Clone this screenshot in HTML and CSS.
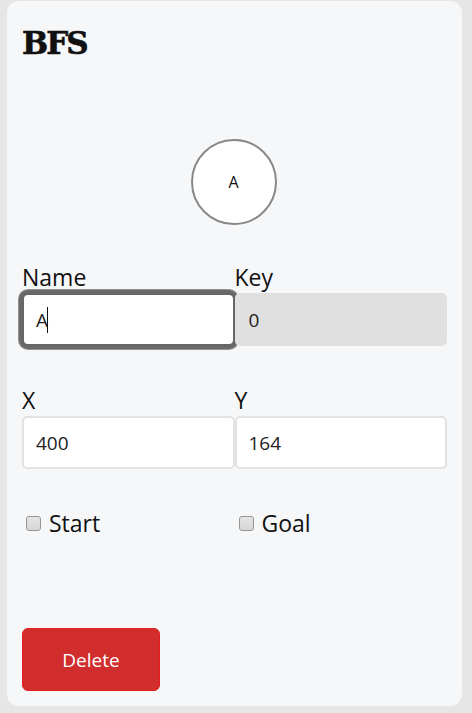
FILE: index.html
```html
<!DOCTYPE html>
<html lang="en">
<head>
<meta charset="utf-8">
<title>BFS</title>
<link rel="stylesheet" href="styles.css">
</head>
<body>
<div class="card">
  <h1 class="title">BFS</h1>
  <div class="preview"><div class="node">A</div></div>
  <div class="fields">
    <label class="field">
      <span class="label">Name</span>
      <span class="input-wrap">
        <input class="input is-focused" type="text" value="A">
        <span class="caret"></span>
      </span>
    </label>
    <label class="field">
      <span class="label">Key</span>
      <span class="input-wrap"><input class="input is-readonly" type="text" value="0" readonly></span>
    </label>
    <label class="field">
      <span class="label">X</span>
      <span class="input-wrap"><input class="input" type="text" value="400"></span>
    </label>
    <label class="field">
      <span class="label">Y</span>
      <span class="input-wrap"><input class="input" type="text" value="164"></span>
    </label>
  </div>
  <div class="checks">
    <label class="check"><input type="checkbox" class="box"><span>Start</span></label>
    <label class="check"><input type="checkbox" class="box"><span>Goal</span></label>
  </div>
  <button class="delete" type="button">Delete</button>
</div>
</body>
</html>
```
FILE: styles.css
```css
* { box-sizing: border-box; }
html, body { margin: 0; }
body {
  background: #e6e6e6;
  padding: 1px 10px 7px 7px;
  font-family: "Open Sans", "Noto Sans", sans-serif;
  color: #111;
}
.card {
  height: 705px;
  background: #f6f7f9;
  border-radius: 12px;
  padding: 24px 15px 15px;
  display: flex;
  flex-direction: column;
}
.title {
  margin: 0;
  font-family: "DejaVu Serif", serif;
  font-weight: 700;
  font-size: 31px;
  line-height: 36px;
  letter-spacing: -2px;
  -webkit-text-stroke: 0.6px #111;
  color: #111;
}
.preview {
  display: flex;
  justify-content: center;
  margin-top: 78px;
}
.node {
  width: 86px;
  height: 86px;
  border-radius: 50%;
  border: 2px solid #888;
  background: #fff;
  display: flex;
  align-items: center;
  justify-content: center;
  font-size: 16px;
  color: #111;
  margin-right: 2px;
}
.fields {
  margin-top: 38px;
  display: grid;
  grid-template-columns: 1fr 1fr;
  row-gap: 40px;
}
.field {
  display: flex;
  flex-direction: column;
}
.label {
  font-size: 23px;
  line-height: 28px;
  color: #111;
}
.input-wrap {
  position: relative;
  display: block;
  margin-top: 2px;
}
.input {
  display: block;
  width: 100%;
  height: 53px;
  border: 2px solid #e2e2e2;
  border-radius: 5px;
  background: #fff;
  padding: 0 12px;
  font-family: "Open Sans", "Noto Sans", sans-serif;
  font-size: 19px;
  color: #222;
  outline: none;
}
.input.is-readonly {
  background: #e0e0e0;
  border-color: #e0e0e0;
}
.input.is-focused {
  border-color: #666;
  border-radius: 6px;
  box-shadow: 0 0 0 3px #6a6a6a, 0 0 0 4px #929292;
}
.caret {
  position: absolute;
  left: 25px;
  top: 14px;
  width: 1px;
  height: 26px;
  background: #111;
}
.checks {
  margin-top: 40px;
  display: grid;
  grid-template-columns: 1fr 1fr;
}
.check {
  display: flex;
  align-items: center;
  font-size: 23px;
  line-height: 28px;
  color: #111;
}
.box {
  appearance: none;
  -webkit-appearance: none;
  width: 15px;
  height: 15px;
  margin: 0 8px 0 4px;
  border: 1px solid #959595;
  border-radius: 3px;
  background: linear-gradient(#e6e6e6, #d6d6d6);
}
.delete {
  margin-top: auto;
  align-self: flex-start;
  width: 138px;
  height: 63px;
  background: #d22d2d;
  border: 1px solid #e61e1e;
  border-radius: 6px;
  color: #fff;
  font-family: "Open Sans", "Noto Sans", sans-serif;
  font-size: 19px;
}
```
